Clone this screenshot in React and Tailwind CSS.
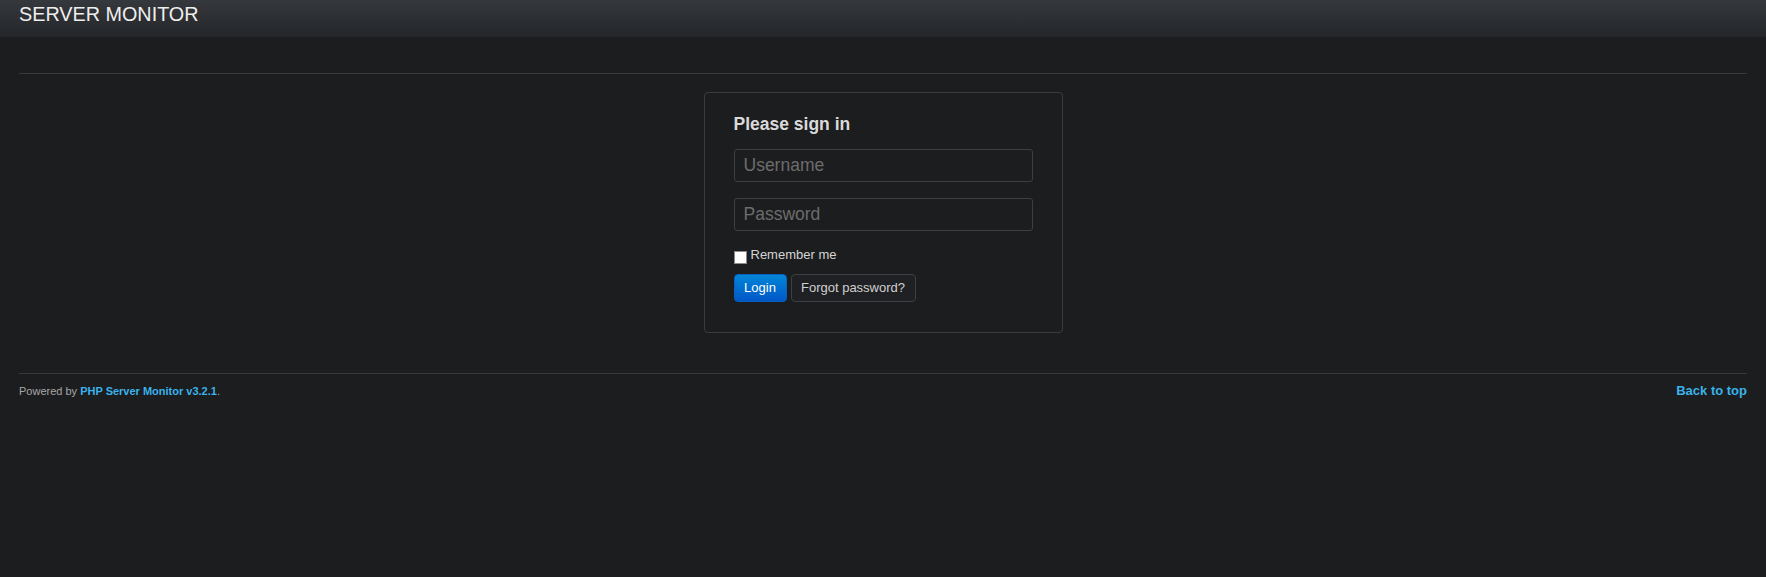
export default function App() {
  return (
    <div className="min-h-screen bg-[#1c1d1f] font-['Liberation_Sans',Arial,sans-serif] text-[#d0d0d0]">
      <header className="h-[37px] bg-gradient-to-b from-[#35383c] to-[#24262a] px-[19px]">
        <div className="pt-[2px] text-[19.8px] leading-[24px] text-[#eeeeee]">SERVER MONITOR</div>
      </header>

      <main className="px-[19px]">
        <div className="mt-[36px] h-px bg-[#38393b]" />

        <div className="mt-[18px] flex justify-center">
          <form className="w-[359px] rounded-[4px] border border-[#3a3b3d] px-[29px] pt-[21px] pb-[30px]">
            <h2 className="text-[17.5px] font-bold leading-[20px] text-[#dadada]">Please sign in</h2>
            <input
              type="text"
              placeholder="Username"
              className="mt-[15px] block h-[33px] w-full rounded-[3px] border border-[#3d3e40] bg-[#1c1d1f] px-[9px] text-[17.5px] text-[#dddddd] outline-none placeholder:text-[#6c6c6c]"
            />
            <input
              type="password"
              placeholder="Password"
              className="mt-[16px] block h-[33px] w-full rounded-[3px] border border-[#3d3e40] bg-[#1c1d1f] px-[9px] text-[17.5px] text-[#dddddd] outline-none placeholder:text-[#6c6c6c]"
            />
            <label className="mt-[14px] flex items-start gap-[4px] text-[13px] leading-[20px] text-[#d4d4d4]">
              <span className="mt-[6px] block h-[13px] w-[13px] border border-[#8a8a8a] bg-white" />
              Remember me
            </label>
            <div className="mt-[9px] flex gap-[4px]">
              <button
                type="button"
                className="h-[28px] w-[53px] rounded-[4px] border border-[#0a5fc0] bg-gradient-to-b from-[#0786d8] to-[#0057c6] text-[13px] text-white"
              >
                Login
              </button>
              <button
                type="button"
                className="h-[28px] w-[125px] rounded-[4px] border border-[#3e3f41] bg-[#1f2023] text-[13px] text-[#d0d0d0]"
              >
                Forgot password?
              </button>
            </div>
          </form>
        </div>

        <div className="mt-[40px] h-px bg-[#38393b]" />
        <footer className="mt-[7px] flex items-baseline justify-between leading-[20px]">
          <p className="text-[11px] text-[#a8a8a8]">
            Powered by <a href="#" className="font-bold text-[#3ab2ea]">PHP Server Monitor v3.2.1</a>.
          </p>
          <a href="#" className="text-[13px] font-bold text-[#3ab2ea]">Back to top</a>
        </footer>
      </main>
    </div>
  )
}
